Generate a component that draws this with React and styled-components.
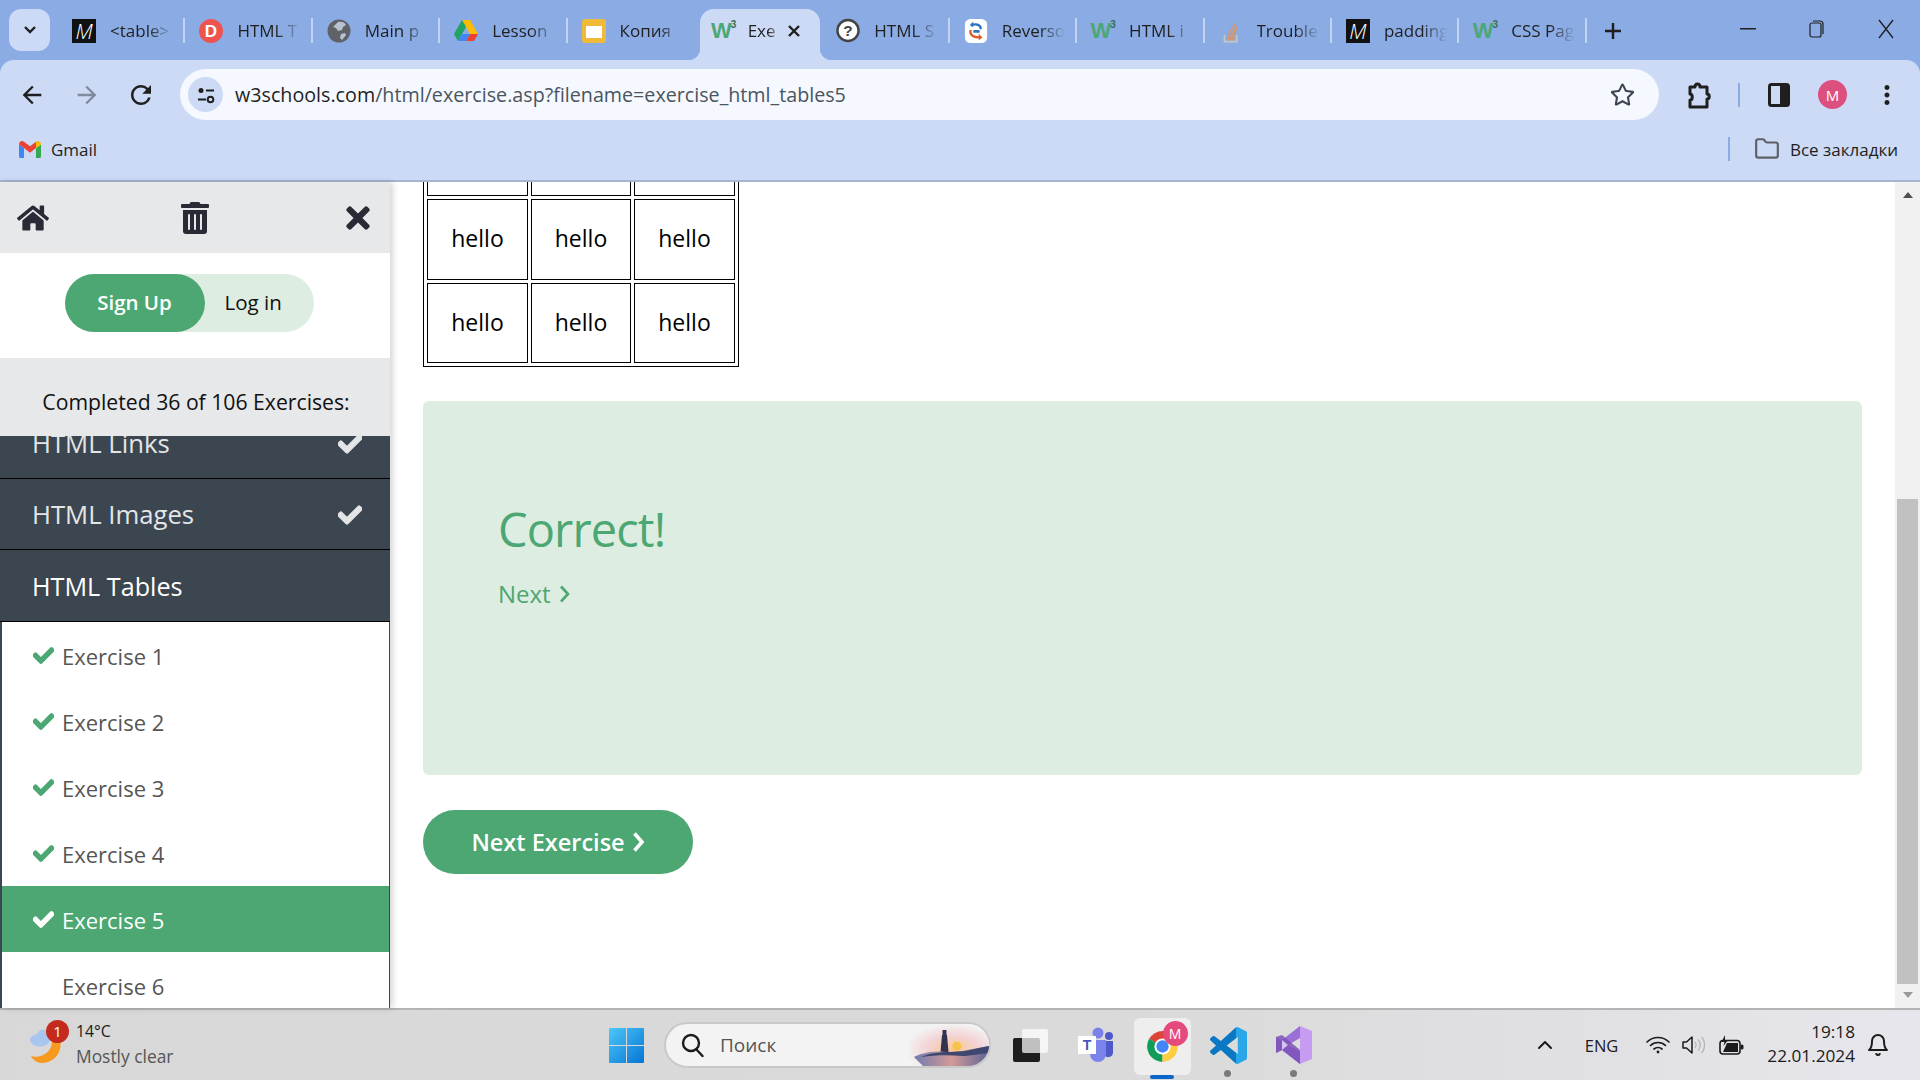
import React from "react";
import styled, { createGlobalStyle } from "styled-components";
import { FaHome, FaTrashAlt, FaTimes, FaCheck, FaRegStar } from "react-icons/fa";
import { MdArrowBack, MdArrowForward, MdRefresh, MdMoreVert } from "react-icons/md";
import { LuFolder, LuBell, LuChevronUp } from "react-icons/lu";

const GlobalStyle = createGlobalStyle`
  html, body {
    margin: 0;
    height: 100%;
    overflow: hidden;
    background: #8aabe4;
    font-family: "Open Sans", "Noto Sans", sans-serif;
  }
  * { box-sizing: border-box; }
`;

const Page = styled.div`
  display: flex;
  flex-direction: column;
  width: 1920px;
  height: 1080px;
  overflow: hidden;
`;

/* browser tabs */
const TabStrip = styled.div`
  display: flex;
  align-items: flex-start;
  height: 60px;
  background: #8aabe4;
`;

const TabSearch = styled.div`
  display: flex;
  align-items: center;
  justify-content: center;
  width: 41px;
  height: 42px;
  margin: 9px 8px 0 9px;
  border-radius: 12px;
  background: #ccdaf5;
  color: #1f1f1f;
`;

const Tab = styled.div`
  position: relative;
  display: flex;
  align-items: center;
  flex: none;
  margin-top: 9px;
  height: 51px;
  padding-bottom: 8px;
  font-size: 17px;
  color: #1f1f1f;
  ${(p) =>
    p.$active
      ? `
    width: 120px;
    margin-left: 4.7px;
    margin-right: 2.7px;
    padding-left: 12px;
    border-radius: 14px 14px 0 0;
    background: #ccdaf5;
    &::before, &::after {
      content: "";
      position: absolute;
      bottom: 0;
      width: 12px;
      height: 12px;
    }
    &::before {
      left: -12px;
      background: radial-gradient(circle at 0 0, transparent 12px, #ccdaf5 12.5px);
    }
    &::after {
      right: -12px;
      background: radial-gradient(circle at 100% 0, transparent 12px, #ccdaf5 12.5px);
    }
  `
      : `
    width: 127.4px;
    padding-left: 14px;
    &::after {
      content: "";
      display: ${p.$noLine ? "none" : "block"};
      position: absolute;
      right: 0;
      top: 9px;
      width: 2px;
      height: 25px;
      background: #c3d3f1;
    }
  `}
`;

const TabIcon = styled.span`
  display: flex;
  align-items: center;
  justify-content: center;
  flex: none;
  width: 24px;
  height: 24px;
  margin-right: ${(p) => (p.$active ? "12px" : "14px")};
`;

const TabTitle = styled.span`
  display: block;
  flex: 1;
  min-width: 0;
  margin-right: ${(p) => (p.$active ? "6px" : "12px")};
  white-space: nowrap;
  overflow: hidden;
  -webkit-mask-image: linear-gradient(to right, #000 60%, transparent 100%);
  mask-image: linear-gradient(to right, #000 60%, transparent 100%);
`;

const TabClose = styled.span`
  display: flex;
  margin-right: 19px;
  color: #1f1f1f;
`;

const MonoIcon = styled.span`
  display: flex;
  align-items: center;
  justify-content: center;
  width: 24px;
  height: 24px;
  background: #111;
  color: #fff;
  font-family: "Open Sans", sans-serif;
  font-style: italic;
  font-weight: 300;
  font-size: 21px;
`;

const W3Icon = styled.span`
  font-family: "Liberation Sans", sans-serif;
  font-weight: 700;
  font-size: 22px;
  line-height: 24px;
  color: #4ca772;
  letter-spacing: -1px;
  sup {
    font-size: 10px;
    line-height: 0;
    color: #3c6b52;
    vertical-align: 10px;
    letter-spacing: 0;
  }
`;

const NewTab = styled.div`
  display: flex;
  align-items: center;
  justify-content: center;
  width: 32px;
  height: 40px;
  margin: 11px 0 0 10px;
  color: #1f1f1f;
`;

const WindowControls = styled.div`
  display: flex;
  margin-left: auto;
  height: 60px;
`;

const WindowButton = styled.div`
  display: flex;
  align-items: center;
  justify-content: center;
  width: 69px;
  padding-bottom: 2px;
  color: #1f1f1f;
`;

/* address bar */
const Toolbar = styled.div`
  display: flex;
  align-items: center;
  height: 60px;
  padding: 9px 0 0 0;
  border-radius: 14px 14px 0 0;
  background: #ccdaf5;
`;

const NavButton = styled.div`
  display: flex;
  align-items: center;
  justify-content: center;
  flex: none;
  width: ${(p) => p.$w || 54}px;
  height: 40px;
  margin-left: ${(p) => p.$ml || 0}px;
  color: ${(p) => (p.$dim ? "#7f8a9c" : "#1f1f1f")};
`;

const Omnibox = styled.div`
  display: flex;
  align-items: center;
  width: 1479px;
  height: 51px;
  margin-left: 8px;
  padding: 0 24px 0 8px;
  border-radius: 26px;
  background: #f5f8fe;
  font-size: 19.7px;
  color: #4a5560;
`;

const SiteChip = styled.span`
  display: flex;
  align-items: center;
  justify-content: center;
  flex: none;
  width: 35px;
  height: 35px;
  margin-right: 12px;
  border-radius: 50%;
  background: #ccdaf5;
`;

const Host = styled.span`
  color: #1f1f1f;
`;

const StarWrap = styled.span`
  display: flex;
  margin-left: auto;
  color: #3f4450;
`;

const ToolbarRule = styled.span`
  flex: none;
  width: 2px;
  height: 24px;
  margin-left: -1px;
  background: #8aabe4;
`;

const Avatar = styled.span`
  display: flex;
  align-items: center;
  justify-content: center;
  flex: none;
  width: 29px;
  height: 29px;
  border-radius: 50%;
  background: #dd4f7e;
  color: #fff;
  font-size: 15px;
`;

/* bookmarks */
const BookmarkBar = styled.div`
  display: flex;
  align-items: center;
  height: 62px;
  padding: 0 22px 2px 19px;
  border-bottom: 2px solid #a8b4d0;
  background: #ccdaf5;
  font-size: 17px;
  color: #1f1f1f;
`;

const BookmarkItem = styled.span`
  display: flex;
  align-items: center;
  gap: 10px;
`;

const BookmarkRule = styled.span`
  width: 2px;
  height: 24px;
  margin: 0 24px 0 auto;
  background: #8aabe4;
`;

const FolderItem = styled.span`
  display: flex;
  align-items: center;
  gap: 10px;
  color: #1f1f1f;
  svg { color: #5c6068; }
`;

/* page */
const Content = styled.div`
  display: flex;
  height: 826px;
  background: #fff;
`;

const Sidebar = styled.aside`
  position: relative;
  z-index: 1;
  display: flex;
  flex-direction: column;
  flex: none;
  width: 390px;
  overflow: hidden;
  box-shadow: 3px 0 6px rgba(0, 0, 0, 0.16);
  background: #fff;
`;

const SideTools = styled.div`
  display: flex;
  align-items: center;
  justify-content: space-between;
  height: 71px;
  padding: 0 15px 0 17px;
  background: #e7e8ea;
  color: #282a35;
`;

const AuthBlock = styled.div`
  display: flex;
  justify-content: center;
  align-items: center;
  height: 105px;
  padding: 0 12px 5px 0;
  background: #fff;
`;

const AuthPill = styled.div`
  display: flex;
  width: 249px;
  height: 58px;
  border-radius: 29px;
  background: #ddede2;
  font-size: 20.5px;
  line-height: 57px;
`;

const SignUp = styled.span`
  width: 140px;
  border-radius: 29px;
  background: #4ca772;
  color: #fff;
  text-align: center;
  font-weight: 600;
`;

const LogIn = styled.span`
  margin-left: 20px;
  color: #111;
`;

const Progress = styled.div`
  height: 78px;
  padding: 26px 0 0 2px;
  background: #e7e8ea;
  text-align: center;
  font-size: 21.2px;
  line-height: 36px;
  color: #111;
`;

const ListViewport = styled.div`
  flex: 1;
  min-height: 0;
  overflow: hidden;
`;

const ListInner = styled.div`
  margin-top: -28px;
`;

const ChapterRow = styled.div`
  display: flex;
  align-items: center;
  justify-content: space-between;
  height: ${(p) => (p.$open ? 72 : 71)}px;
  padding: 1px 28px 0 32px;
  border-bottom: 1px solid #000;
  background: #3c4650;
  color: ${(p) => (p.$open ? "#fff" : "#e3e5e7")};
  font-size: ${(p) => (p.$open ? 25.2 : 25.7)}px;
`;

const ExerciseList = styled.div`
  border-left: 2px solid #3c4650;
  border-right: 1px solid #3c4650;
`;

const ExerciseRow = styled.div`
  display: flex;
  align-items: center;
  height: 66px;
  padding: 1px 0 0 31px;
  background: ${(p) => (p.$current ? "#4ca772" : "#fff")};
  color: ${(p) => (p.$current ? "#fff" : "#555")};
  font-size: 22px;
`;

const CheckSlot = styled.span`
  display: flex;
  flex: none;
  width: 29px;
  color: ${(p) => (p.$current ? "#fff" : "#4ca772")};
`;

const Main = styled.main`
  flex: 1;
  min-width: 0;
  padding: 0 33px;
  overflow: hidden;
`;

const Table = styled.table`
  margin-top: -71px;
  border: 1px solid #000;
  border-spacing: 3px;
  font-size: 23px;
  color: #000;
  td {
    height: 81px;
    padding: 0 0 4px;
    border: 1px solid #000;
    text-align: center;
  }
  tr:last-child td {
    height: 80px;
    padding-bottom: 2px;
  }
`;

const Cell = styled.td`
  width: ${(p) => p.$w}px;
`;

const ResultBox = styled.div`
  height: 374px;
  margin-top: 34px;
  padding: 95px 75px 0;
  border-radius: 6px;
  background: #ddede2;
  color: #4ca772;
`;

const ResultTitle = styled.h2`
  margin: 0;
  font-size: 47px;
  font-weight: 400;
  letter-spacing: -0.9px;
  line-height: 66px;
`;

const ResultLink = styled.div`
  display: flex;
  align-items: center;
  gap: 8px;
  margin-top: 15px;
  font-size: 24px;
  line-height: 34px;
`;

const NextButton = styled.div`
  display: flex;
  align-items: center;
  justify-content: center;
  gap: 7px;
  width: 270px;
  height: 64px;
  margin-top: 35px;
  border-radius: 32px;
  background: #4ca772;
  color: #fff;
  font-size: 23.5px;
  font-weight: 600;
`;

const Scrollbar = styled.div`
  display: flex;
  flex-direction: column;
  align-items: center;
  flex: none;
  width: 25px;
  padding-bottom: 10px;
  background: #f1f1f1;
`;

const ScrollArrow = styled.span`
  width: 0;
  height: 0;
  border-left: 5.5px solid transparent;
  border-right: 5.5px solid transparent;
  ${(p) =>
    p.$down
      ? "margin-top: 8px; border-top: 6px solid #9a9a9a;"
      : "margin-top: 10px; border-bottom: 6px solid #505050;"}
`;

const ScrollThumb = styled.div`
  width: 21px;
  height: 485px;
  margin-top: auto;
  background: #c1c1c1;
`;

/* taskbar */
const Taskbar = styled.footer`
  display: flex;
  align-items: center;
  height: 72px;
  border-top: 2px solid #b4b4b4;
  background: linear-gradient(90deg, #d8d8d8 0%, #dadada 60%, #e6e6ec 100%);
  color: #1b1b1b;
`;

const Weather = styled.div`
  position: relative;
  display: flex;
  align-items: center;
  flex: none;
  width: 593px;
  padding-left: 29px;
`;

const WeatherBadge = styled.span`
  position: absolute;
  left: 46px;
  top: -2px;
  display: flex;
  align-items: center;
  justify-content: center;
  width: 23px;
  height: 23px;
  border-radius: 50%;
  background: #c42b1c;
  color: #fff;
  font-size: 15px;
`;

const WeatherText = styled.div`
  margin: -3px 0 0 11px;
  font-size: 15.8px;
  line-height: 25px;
`;

const WeatherSub = styled.div`
  font-size: 17.4px;
  color: #555;
`;

const TaskSlot = styled.div`
  position: relative;
  display: flex;
  align-items: center;
  justify-content: center;
  flex: none;
  width: 66px;
  height: 70px;
`;

const ActiveTile = styled.div`
  position: relative;
  display: flex;
  align-items: center;
  justify-content: center;
  width: 57px;
  height: 57px;
  margin-top: 2px;
  border-radius: 6px;
  background: #eeeeee;
`;

const SlotBadge = styled.span`
  position: absolute;
  right: 3px;
  top: 3px;
  display: flex;
  align-items: center;
  justify-content: center;
  width: 25px;
  height: 25px;
  border-radius: 50%;
  background: #e54a7c;
  color: #fff;
  font-size: 14px;
`;

const RunningBar = styled.span`
  position: absolute;
  left: 50%;
  bottom: 1px;
  width: 24px;
  height: 4px;
  margin-left: -12px;
  border-radius: 2px;
  background: #0a66c8;
`;

const RunningDot = styled.span`
  position: absolute;
  left: 50%;
  bottom: 3px;
  width: 7px;
  height: 7px;
  margin-left: -4px;
  border-radius: 50%;
  background: #7a7a7a;
`;

const SearchBox = styled.div`
  position: relative;
  display: flex;
  align-items: center;
  flex: none;
  width: 327px;
  height: 46px;
  margin: -1px 6px 0 5px;
  padding-left: 14px;
  border: 2px solid #c9c9c9;
  border-radius: 23px;
  overflow: hidden;
  background: #f3f3f3;
  font-size: 19px;
  color: #555;
`;

const SearchLabel = styled.span`
  margin-left: 16px;
`;

const SearchArt = styled.span`
  position: absolute;
  right: 0;
  top: 0;
  display: flex;
`;

const Tray = styled.div`
  display: flex;
  align-items: center;
  margin-left: auto;
  padding-right: 30px;
`;

const TrayLang = styled.span`
  margin: 0 28px 0 28px;
  font-size: 16.5px;
`;

const TrayIcons = styled.span`
  display: flex;
  align-items: center;
  gap: 12px;
`;

const Clock = styled.div`
  margin: -2px 11px 0 23px;
  text-align: right;
  font-size: 17.2px;
  line-height: 24px;
`;

/* drawn icons */
const GmailIcon = () => (
  <svg width="22" height="17" viewBox="0 0 22 17">
    <path d="M0 3.500L5 7v10H1.500A1.500 1.500 0 0 1 0 15.500z" fill="#4285f4" />
    <path d="M22 3.500L17 7v10h3.500a1.500 1.500 0 0 0 1.500-1.500z" fill="#34a853" />
    <path d="M0 3.500C0 .5 3-.8 5 .8L11 5.300 17 .8V7l-6 4.700L5 7z" fill="#ea4335" />
    <path d="M17 .8C19-.8 22 .5 22 3.500L17 7z" fill="#fbbc04" />
  </svg>
);

const DriveIcon = () => (
  <svg width="24" height="21" viewBox="0 0 24 21">
    <path d="M8 0h8l8 14h-8z" fill="#fbbc04" />
    <path d="M8 0l4 7-8 14-4-7z" fill="#1fa463" />
    <path d="M8 14h8l-4 7H4z" fill="#4285f4" />
    <path d="M16 14h8l-4 7h-8z" fill="#ea4335" />
  </svg>
);

const GlobeIcon = () => (
  <svg width="24" height="24" viewBox="0 0 24 24">
    <circle cx="12" cy="12" r="11.500" fill="#5f6368" />
    <path d="M11 3c3-1 7 0 8 3l-3 2-1 3-4 1-2-3-3-1zM14 15l4-1 1 2-4 5-2-2z" fill="#b9c2d1" />
  </svg>
);

const SlidesIcon = () => (
  <svg width="24" height="24" viewBox="0 0 24 24">
    <rect width="24" height="24" rx="3" fill="#efb93a" />
    <rect x="4" y="7" width="16" height="12" fill="#fff" />
  </svg>
);

const HelpIcon = () => (
  <svg width="25" height="25" viewBox="0 0 25 25">
    <circle cx="12.500" cy="12.500" r="11" fill="#fff" stroke="#444" strokeWidth="2.500" />
    <text x="12.500" y="18" textAnchor="middle" fontSize="16" fontWeight="700" fontFamily="Liberation Sans, sans-serif" fill="#444">?</text>
  </svg>
);

const ReversoIcon = () => (
  <svg width="24" height="24" viewBox="0 0 24 26">
    <rect width="24" height="26" rx="6" fill="#fff" />
    <path d="M7 8c1-3 8-3 10 1v2" fill="none" stroke="#2f74c0" strokeWidth="2.500" />
    <path d="M9 3L5.500 6 9 9z" fill="#2f74c0" />
    <path d="M6 12v3c1 5 7 5 10 5" fill="none" stroke="#e2572b" strokeWidth="2.500" />
    <path d="M15 16l4 4-4 3z" fill="#e2572b" />
    <rect x="9" y="12" width="7" height="3" rx="1" fill="#2f74c0" />
  </svg>
);

const StackIcon = () => (
  <svg width="18" height="26" viewBox="0 0 22 28">
    <path d="M3 19v8h15v-8" fill="none" stroke="#c9c6bd" strokeWidth="2" />
    <path d="M6 24h9M6 21l9 1M7 17l8 3M9 13l7 5M12 9l5 7M15 5l3 8" stroke="#ef8f4a" strokeWidth="2" fill="none" opacity="0.85" />
  </svg>
);

const TuneIcon = () => (
  <svg width="20" height="20" viewBox="0 0 20 20" fill="none" stroke="#1f1f1f" strokeWidth="2">
    <circle cx="5" cy="5.500" r="2.500" fill="#1f1f1f" stroke="none" />
    <path d="M10 5.500h8M2 14.500h8" />
    <circle cx="14.500" cy="14.500" r="2.800" />
  </svg>
);

const PuzzleIcon = () => (
  <svg width="24" height="28" viewBox="0 0 24 28" fill="none" stroke="#1f1f1f" strokeWidth="3" strokeLinejoin="round">
    <path d="M3 6h5c0-4 5-4 5 0h7v7c3 0 3 5 0 5v8H3v-7c3 0 3-6 0-6z" />
  </svg>
);

const PanelIcon = () => (
  <svg width="22" height="24" viewBox="0 0 22 24">
    <rect x="1.500" y="1.500" width="19" height="21" rx="2" fill="none" stroke="#1f1f1f" strokeWidth="3" />
    <rect x="12" y="1.500" width="8.500" height="21" fill="#1f1f1f" />
  </svg>
);

const WeatherIcon = () => (
  <svg width="36" height="38" viewBox="0 0 36 38">
    <path d="M31 14c3 12-6 23-18 23C8 37 4 34 2 30c10 3 22-4 21-16z" fill="#f59a1e" />
    <ellipse cx="11" cy="14" rx="10" ry="6.500" fill="#a9c6ee" />
    <circle cx="14" cy="9" r="5.500" fill="#a9c6ee" />
  </svg>
);

const WindowsIcon = () => (
  <svg width="35" height="35" viewBox="0 0 35 35">
    <defs>
      <linearGradient id="win" x1="0" y1="0" x2="1" y2="1">
        <stop offset="0" stopColor="#4cc8f7" />
        <stop offset="1" stopColor="#0674d4" />
      </linearGradient>
    </defs>
    <path d="M0 1a1 1 0 0 1 1-1h16v17H0zM18 0h16a1 1 0 0 1 1 1v16H18zM0 18h17v17H1a1 1 0 0 1-1-1zM18 18h17v16a1 1 0 0 1-1 1H18z" fill="url(#win)" />
  </svg>
);

const SearchGlass = () => (
  <svg width="24" height="26" viewBox="0 0 24 26" fill="none" stroke="#1b1b1b" strokeWidth="2.400">
    <circle cx="11" cy="11" r="8" />
    <path d="M16.500 17.500l6 6.500" strokeLinecap="round" />
  </svg>
);

const LighthouseArt = () => (
  <svg width="80" height="42" viewBox="0 0 80 42">
    <defs>
      <radialGradient id="dusk" cx="0.55" cy="0.6" r="0.6">
        <stop offset="0" stopColor="#f8c892" />
        <stop offset="0.55" stopColor="#f3d4d6" />
        <stop offset="1" stopColor="#f3f3f3" />
      </radialGradient>
      <linearGradient id="sea" x1="0" y1="0" x2="1" y2="0">
        <stop offset="0" stopColor="#6f7bb0" />
        <stop offset="0.5" stopColor="#d39a98" />
        <stop offset="1" stopColor="#5a6496" />
      </linearGradient>
    </defs>
    <rect width="80" height="42" fill="url(#dusk)" />
    <circle cx="48" cy="22" r="4.500" fill="#f7c34a" />
    <path d="M33 11h5l1.500 17h-8z" fill="#2f3350" />
    <rect x="33.500" y="6" width="4" height="5" fill="#2f3350" />
    <path d="M5 33c12-6 24-6 34-5l14-1 27-5v20H14z" fill="url(#sea)" />
    <path d="M12 33c12-5 22-5 30-5l14-1 24-5v7c-12 1-20 3-26 3-14-1-28-1-42 1z" fill="#3f4770" />
  </svg>
);

const StoreIcon = () => (
  <svg width="35" height="33" viewBox="0 0 35 33">
    <rect x="0" y="9" width="27" height="24" rx="2" fill="#1e1e1e" />
    <rect x="9" y="0" width="26" height="24" rx="2" fill="#fff" opacity="0.72" />
  </svg>
);

const TeamsIcon = () => (
  <svg width="36" height="36" viewBox="0 0 36 36">
    <circle cx="20" cy="6" r="5.500" fill="#7b83eb" />
    <circle cx="31" cy="9" r="4" fill="#5059c9" />
    <path d="M26 14h9v12a5 5 0 0 1-9 2z" fill="#5059c9" />
    <path d="M12 13h16v14a8 8 0 0 1-16 0z" fill="#7b83eb" />
    <rect x="0" y="9" width="18" height="18" fill="#fff" />
    <text x="9" y="23" textAnchor="middle" fontSize="14" fontWeight="700" fontFamily="Liberation Sans, sans-serif" fill="#4b53bc">T</text>
  </svg>
);

const ChromeIcon = () => (
  <svg width="37" height="37" viewBox="0 0 48 48">
    <path d="M24 24L41.320 14A20 20 0 0 0 6.680 14z" fill="#db4437" />
    <path d="M24 24L6.680 14A20 20 0 0 0 24 44z" fill="#0f9d58" />
    <path d="M24 24L24 44A20 20 0 0 0 41.320 14z" fill="#ffcd40" />
    <circle cx="24" cy="24" r="10.500" fill="#fff" />
    <circle cx="24" cy="24" r="8" fill="#4285f4" />
  </svg>
);

const CodeIcon = () => (
  <svg width="37" height="37" viewBox="0 0 24 24">
    <defs>
      <linearGradient id="code" x1="0" y1="0" x2="1" y2="0">
        <stop offset="0.7" stopColor="#0a78c2" />
        <stop offset="0.7" stopColor="#2aa7e8" />
      </linearGradient>
    </defs>
    <path
      d="M23.150 2.587L18.210.21a1.494 1.494 0 0 0-1.705.29l-9.460 8.630-4.120-3.128a.999.999 0 0 0-1.276.057L.327 7.261A1 1 0 0 0 .326 8.740L3.899 12 .326 15.260a1 1 0 0 0 .001 1.479L1.650 17.940a.999.999 0 0 0 1.276.057l4.120-3.128 9.460 8.630a1.492 1.492 0 0 0 1.704.29l4.942-2.377A1.500 1.500 0 0 0 24 20.060V3.939a1.500 1.500 0 0 0-.850-1.352zm-5.146 14.861L10.826 12l7.178-5.448v10.896z"
      fill="url(#code)"
    />
  </svg>
);

const VisualStudioIcon = () => (
  <svg width="36" height="38" viewBox="0 0 36 38">
    <path d="M24 0l12 5v28l-12 5z" fill="#c59cf2" />
    <path d="M24 0v12L12 19l12 7v12L6 24 0 27V11l6 3z" fill="#9a6fd8" />
    <path d="M0 11l6-2 18 15v14L6 24l-6 3z" fill="#7d54b8" opacity="0.85" />
    <path d="M6 14v10l6-5z" fill="#d6c2f0" />
  </svg>
);

const WifiIcon = () => (
  <svg width="24" height="18" viewBox="0 0 24 18" fill="none" stroke="#1b1b1b" strokeWidth="1.700" strokeLinecap="round">
    <path d="M1 6c6-6 16-6 22 0" />
    <path d="M4.500 9.500c4-4 11-4 15 0" />
    <path d="M8 13c2.200-2 5.800-2 8 0" />
    <circle cx="12" cy="16" r="1.400" fill="#1b1b1b" stroke="none" />
  </svg>
);

const SpeakerIcon = () => (
  <svg width="25" height="20" viewBox="0 0 25 20" fill="none">
    <path d="M1 7h3.500L10 2v16l-5.500-5H1z" stroke="#1b1b1b" strokeWidth="1.500" strokeLinejoin="round" />
    <path d="M13 7c1.500 2 1.500 4 0 6" stroke="#b5b5b5" strokeWidth="1.300" />
    <path d="M16 4.500c3 3 3 8 0 11" stroke="#b5b5b5" strokeWidth="1.300" />
    <path d="M19.500 2c4 4 4 12 0 16" stroke="#b5b5b5" strokeWidth="1.300" />
  </svg>
);

const BatteryIcon = () => (
  <svg width="25" height="20" viewBox="0 0 25 20">
    <rect x="1" y="5.500" width="20" height="13.500" rx="3" fill="none" stroke="#1b1b1b" strokeWidth="1.600" />
    <path d="M8 8h11v9H4z" fill="#1b1b1b" />
    <rect x="21.500" y="9.500" width="3" height="5" rx="1.500" fill="#1b1b1b" />
    <path d="M6 0L2.500 7h3L4.500 11 9 5H6z" fill="#1b1b1b" />
  </svg>
);

const ThinChevron = () => (
  <svg width="11" height="18" viewBox="0 0 11 18" fill="none" stroke="#4ca772" strokeWidth="2.600">
    <path d="M2 1.500l7 7.500-7 7.500" />
  </svg>
);

const BoldChevron = () => (
  <svg width="13" height="20" viewBox="0 0 13 20" fill="none" stroke="#fff" strokeWidth="3.600">
    <path d="M2.500 1.500L10 10l-7.500 8.500" />
  </svg>
);

const BoldCheck = ({ size }) => <FaCheck size={size} stroke="currentColor" strokeWidth="30" />;

const w3 = <W3Icon>W<sup>3</sup></W3Icon>;

const tabs = [
  { title: "<table>", icon: <MonoIcon>M</MonoIcon> },
  {
    title: "HTML T",
    icon: (
      <svg width="24" height="24">
        <circle cx="12" cy="12" r="12" fill="#ef5350" />
        <text x="12" y="18" textAnchor="middle" fontSize="17" fontWeight="700" fontFamily="Liberation Sans, sans-serif" fill="#fff">D</text>
      </svg>
    ),
  },
  { title: "Main p", icon: <GlobeIcon /> },
  { title: "Lesson", icon: <DriveIcon /> },
  { title: "Копия", icon: <SlidesIcon /> },
  { title: "Exe", icon: w3, active: true },
  { title: "HTML S", icon: <HelpIcon /> },
  { title: "Reverso", icon: <ReversoIcon /> },
  { title: "HTML i", icon: w3 },
  { title: "Trouble", icon: <StackIcon /> },
  { title: "padding", icon: <MonoIcon>M</MonoIcon> },
  { title: "CSS Pag", icon: w3 },
];

const rows = [0, 1, 2];
const widths = [101, 100, 101];

export default function App() {
  return (
    <Page>
      <GlobalStyle />
      <TabStrip>
        <TabSearch>
          <svg width="14" height="10" viewBox="0 0 14 10" fill="none" stroke="#1f1f1f" strokeWidth="2.400">
            <path d="M2 2l5 5 5-5" />
          </svg>
        </TabSearch>
        {tabs.map((tab, i) => (
          <Tab key={i} $active={tab.active} $noLine={i === 4}>
            <TabIcon $active={tab.active}>{tab.icon}</TabIcon>
            <TabTitle $active={tab.active}>{tab.title}</TabTitle>
            {tab.active && (
              <TabClose>
                <svg width="14" height="14" viewBox="0 0 14 14" stroke="#1f1f1f" strokeWidth="2.400">
                  <path d="M2 2l10 10M12 2L2 12" />
                </svg>
              </TabClose>
            )}
          </Tab>
        ))}
        <NewTab>
          <svg width="18" height="18" viewBox="0 0 18 18" stroke="#1f1f1f" strokeWidth="2.400">
            <path d="M9 1v16M1 9h16" />
          </svg>
        </NewTab>
        <WindowControls>
          <WindowButton>
            <svg width="16" height="2"><rect width="16" height="1.500" fill="#1f1f1f" /></svg>
          </WindowButton>
          <WindowButton>
            <svg width="16" height="18" viewBox="0 0 16 18" fill="none" stroke="#1f1f1f" strokeWidth="1.200">
              <rect x="1" y="3" width="11" height="14" rx="2" />
              <path d="M4 1h7a3 3 0 0 1 3 3v10" />
            </svg>
          </WindowButton>
          <WindowButton>
            <svg width="18" height="20" viewBox="0 0 18 20" stroke="#1f1f1f" strokeWidth="1.300">
              <path d="M2 1l14 18M16 1L2 19" />
            </svg>
          </WindowButton>
        </WindowControls>
      </TabStrip>

      <Toolbar>
        <NavButton $w={64}><MdArrowBack size={28} /></NavButton>
        <NavButton $w={46} $dim><MdArrowForward size={28} /></NavButton>
        <NavButton $w={62}><MdRefresh size={30} /></NavButton>
        <Omnibox>
          <SiteChip><TuneIcon /></SiteChip>
          <Host>w3schools.com</Host>/html/exercise.asp?filename=exercise_html_tables5
          <StarWrap><FaRegStar size={25} /></StarWrap>
        </Omnibox>
        <NavButton $w={80}><PuzzleIcon /></NavButton>
        <ToolbarRule />
        <NavButton $w={78}><PanelIcon /></NavButton>
        <Avatar>M</Avatar>
        <NavButton $w={40} $ml={20}><MdMoreVert size={30} /></NavButton>
      </Toolbar>

      <BookmarkBar>
        <BookmarkItem><GmailIcon />Gmail</BookmarkItem>
        <BookmarkRule />
        <FolderItem><LuFolder size={26} />Все закладки</FolderItem>
      </BookmarkBar>

      <Content>
        <Sidebar>
          <SideTools>
            <FaHome size={32} />
            <FaTrashAlt size={32} />
            <FaTimes size={34} />
          </SideTools>
          <AuthBlock>
            <AuthPill>
              <SignUp>Sign Up</SignUp>
              <LogIn>Log in</LogIn>
            </AuthPill>
          </AuthBlock>
          <Progress>Completed 36 of 106 Exercises:</Progress>
          <ListViewport>
            <ListInner>
              <ChapterRow>HTML Links<BoldCheck size={24} /></ChapterRow>
              <ChapterRow>HTML Images<BoldCheck size={24} /></ChapterRow>
              <ChapterRow $open>HTML Tables</ChapterRow>
              <ExerciseList>
                {[1, 2, 3, 4, 5, 6].map((n) => (
                  <ExerciseRow key={n} $current={n === 5}>
                    <CheckSlot $current={n === 5}>{n < 6 && <BoldCheck size={21} />}</CheckSlot>
                    Exercise {n}
                  </ExerciseRow>
                ))}
              </ExerciseList>
            </ListInner>
          </ListViewport>
        </Sidebar>

        <Main>
          <Table>
            <tbody>
              {rows.map((r) => (
                <tr key={r}>
                  {widths.map((w, c) => (
                    <Cell key={c} $w={w}>hello</Cell>
                  ))}
                </tr>
              ))}
            </tbody>
          </Table>
          <ResultBox>
            <ResultTitle>Correct!</ResultTitle>
            <ResultLink>Next <ThinChevron /></ResultLink>
          </ResultBox>
          <NextButton>Next Exercise <BoldChevron /></NextButton>
        </Main>

        <Scrollbar>
          <ScrollArrow />
          <ScrollThumb />
          <ScrollArrow $down />
        </Scrollbar>
      </Content>

      <Taskbar>
        <Weather>
          <WeatherIcon />
          <WeatherBadge>1</WeatherBadge>
          <WeatherText>
            14°C
            <WeatherSub>Mostly clear</WeatherSub>
          </WeatherText>
        </Weather>
        <TaskSlot><WindowsIcon /></TaskSlot>
        <SearchBox>
          <SearchGlass />
          <SearchLabel>Поиск</SearchLabel>
          <SearchArt><LighthouseArt /></SearchArt>
        </SearchBox>
        <TaskSlot><StoreIcon /></TaskSlot>
        <TaskSlot><TeamsIcon /></TaskSlot>
        <TaskSlot>
          <ActiveTile>
            <ChromeIcon />
            <SlotBadge>M</SlotBadge>
          </ActiveTile>
          <RunningBar />
        </TaskSlot>
        <TaskSlot><CodeIcon /><RunningDot /></TaskSlot>
        <TaskSlot><VisualStudioIcon /><RunningDot /></TaskSlot>
        <Tray>
          <LuChevronUp size={24} />
          <TrayLang>ENG</TrayLang>
          <TrayIcons>
            <WifiIcon />
            <SpeakerIcon />
            <BatteryIcon />
          </TrayIcons>
          <Clock>19:18<br />22.01.2024</Clock>
          <LuBell size={24} />
        </Tray>
      </Taskbar>
    </Page>
  );
}
